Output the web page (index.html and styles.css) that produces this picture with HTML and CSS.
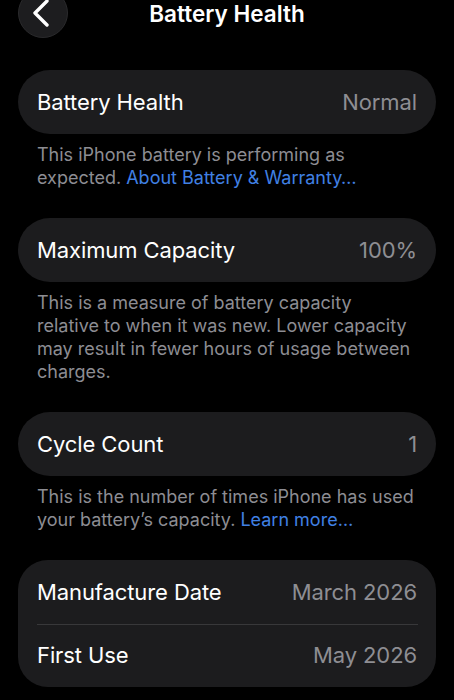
FILE: index.html
```html
<!DOCTYPE html>
<html lang="en">
<head>
<meta charset="utf-8">
<title>Battery Health</title>
<link rel="stylesheet" href="styles.css">
</head>
<body>
<header class="nav">
  <div class="nav-side">
    <button class="back" aria-label="Back">
      <svg width="20" height="28" viewBox="0 0 20 28"><path d="M16 2 L4 14 L16 26" fill="none" stroke="#fff" stroke-width="3.4" stroke-linecap="round" stroke-linejoin="round"/></svg>
    </button>
  </div>
  <h1 class="title">Battery Health</h1>
  <div class="nav-side"></div>
</header>

<main class="content">
  <section class="section">
    <div class="card">
      <div class="row"><span class="label">Battery Health</span><span class="value">Normal</span></div>
    </div>
    <p class="note">This iPhone battery is performing as expected. <a class="link">About Battery &amp; Warranty…</a></p>
  </section>

  <section class="section">
    <div class="card">
      <div class="row"><span class="label">Maximum Capacity</span><span class="value">100%</span></div>
    </div>
    <p class="note">This is a measure of battery capacity relative to when it was new. Lower capacity may result in fewer hours of usage between charges.</p>
  </section>

  <section class="section">
    <div class="card">
      <div class="row"><span class="label">Cycle Count</span><span class="value">1</span></div>
    </div>
    <p class="note">This is the number of times iPhone has used your battery’s capacity. <a class="link">Learn more…</a></p>
  </section>

  <section class="section">
    <div class="card card-group">
      <div class="row"><span class="label">Manufacture Date</span><span class="value">March 2026</span></div>
      <div class="row"><span class="label">First Use</span><span class="value">May 2026</span></div>
    </div>
  </section>
</main>
</body>
</html>
```

FILE: styles.css
```css
* { box-sizing: border-box; }

html, body {
  margin: 0;
  padding: 0;
  background: #000;
}

body {
  font-family: Inter, "Noto Sans", "Liberation Sans", sans-serif;
  color: #fff;
  -webkit-font-smoothing: antialiased;
}

.nav {
  display: grid;
  grid-template-columns: 1fr auto 1fr;
  align-items: start;
  height: 38px;
  padding: 0 18px;
}

.nav-side {
  display: flex;
  align-items: center;
}

.back {
  width: 50px;
  height: 50px;
  margin-top: -12px;
  border-radius: 50%;
  background: #1d1d1f;
  border: 1px solid #2a2a2c;
  display: flex;
  align-items: center;
  justify-content: center;
  padding: 0 4px 0 0;
  cursor: pointer;
}

.title {
  margin: 0;
  font-size: 22.5px;
  line-height: 27px;
  font-weight: 600;
  color: #fff;
}

.content {
  padding: 32px 18px 0;
  display: flex;
  flex-direction: column;
  gap: 29px;
}

.card {
  background: #1c1c1e;
  border-radius: 32px;
}

.card-group {
  border-radius: 30px;
}

.row {
  display: flex;
  justify-content: space-between;
  align-items: center;
  height: 64px;
  padding: 0 19px;
  font-size: 22px;
  letter-spacing: -0.1px;
}

.card-group .row {
  height: 63.5px;
  position: relative;
}

.card-group .row + .row::before {
  content: "";
  position: absolute;
  top: 0;
  left: 19px;
  right: 18px;
  height: 1px;
  background: #38383a;
}

.label {
  color: #fff;
}

.value {
  color: #8e8e93;
}

.note {
  margin: 9px 0 0;
  padding: 0 19px;
  font-size: 18px;
  line-height: 23px;
  color: #8d8d93;
}

.link {
  color: #4080e4;
  text-decoration: none;
}
```
